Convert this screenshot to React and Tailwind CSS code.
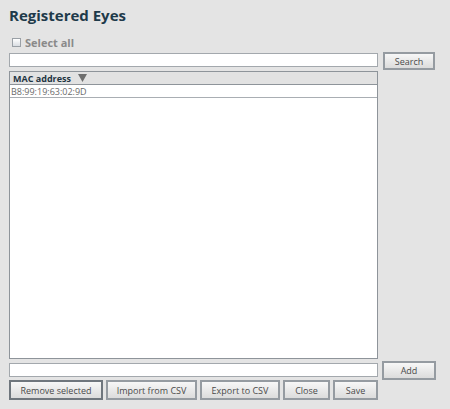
import React from 'react';

const font = { fontFamily: '"Open Sans", "Noto Sans", sans-serif' };

// Grey bevel-style button used across the dialog
const Btn = ({ children, className = '', focused = false }) => (
  <button
    className={`border-2 ${focused ? 'border-[#6f767d]' : 'border-[#959ba1]'} bg-gradient-to-b from-[#f7f7f7] to-[#dcdcdc] text-[9px] text-[#4a4a4a] leading-none shrink-0 ${className}`}
  >
    {children}
  </button>
);

export default function App() {
  return (
    <div className="w-[450px] h-[409px] bg-[#e4e4e4] pl-[9px] pt-[4px] leading-none" style={font}>
      <h1 className="text-[15px] font-bold text-[#1e3a4a] leading-[22px]">Registered Eyes</h1>

      <label className="mt-[12px] ml-[3px] flex items-center gap-[4px] h-[9px]">
        <span className="w-[9px] h-[9px] border border-[#9aa0a6] bg-gradient-to-b from-[#ffffff] to-[#d9dde2]" />
        <span className="text-[11px] font-bold text-[#8a8a8a] leading-none">Select all</span>
      </label>

      <div className="mt-[6px] flex items-start h-[14px]">
        <input className="w-[369px] h-[14px] border border-[#a3a8ad] bg-white outline-none" />
        <Btn className="ml-[5px] w-[52px] -mt-[1px] h-[18px]">Search</Btn>
      </div>

      <div className="mt-[4px] w-[369px] h-[288px] border border-[#8e949a] bg-white flex flex-col">
        <div className="h-[13px] border-b border-[#8e949a] bg-[#e2e2e2] flex items-center pl-[3px] gap-[7px]">
          <span className="text-[9px] font-bold text-[#1f3542] leading-none">MAC address</span>
          <svg width="9" height="8" viewBox="0 0 9 8">
            <path d="M0 0 H9 L4.5 8 Z" fill="#6e6e6e" />
          </svg>
        </div>
        <div className="h-[13px] border-b border-[#a9aeb3] flex items-center pl-[1px]">
          <span className="text-[9px] text-[#6b6b6b] leading-none">B8:99:19:63:02:9D</span>
        </div>
      </div>

      <div className="mt-[4px] flex items-start h-[14px]">
        <input className="w-[369px] h-[14px] border border-[#a3a8ad] bg-white outline-none" />
        <Btn className="ml-[4px] w-[54px] -mt-[2px] h-[19px]">Add</Btn>
      </div>

      <div className="mt-[3px] flex gap-[3px]">
        <Btn focused className="w-[94px] h-[20px]">Remove selected</Btn>
        <Btn className="w-[91px] h-[20px]">Import from CSV</Btn>
        <Btn className="w-[80px] h-[20px]">Export to CSV</Btn>
        <Btn className="w-[47px] h-[20px]">Close</Btn>
        <Btn className="w-[45px] h-[20px]">Save</Btn>
      </div>
    </div>
  );
}
